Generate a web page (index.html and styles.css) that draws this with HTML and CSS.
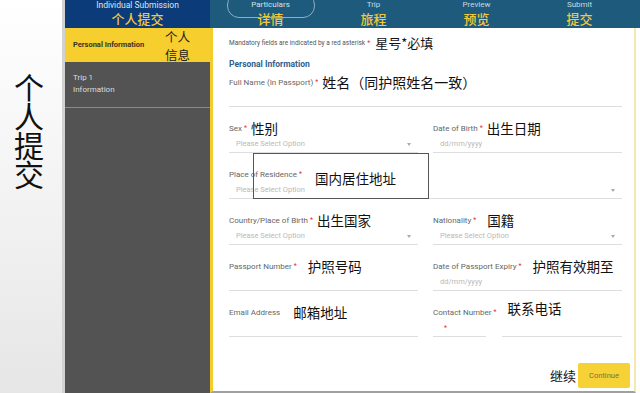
FILE: index.html
```html
<!DOCTYPE html>
<html lang="zh">
<head>
<meta charset="utf-8">
<title>Individual Submission</title>
<link rel="stylesheet" href="styles.css">
</head>
<body>
<div class="page">
  <aside class="rail"><span class="rail-text">个人提交</span></aside>
  <div class="app">
    <header class="topbar">
      <div class="brand"><span class="en">Individual Submission</span><span class="zh">个人提交</span></div>
      <nav class="tabs">
        <div class="tab active"><span class="en">Particulars</span><span class="zh">详情</span></div>
        <div class="tab"><span class="en">Trip</span><span class="zh">旅程</span></div>
        <div class="tab"><span class="en">Preview</span><span class="zh">预览</span></div>
        <div class="tab"><span class="en">Submit</span><span class="zh">提交</span></div>
      </nav>
    </header>
    <div class="body">
      <aside class="sidebar">
        <div class="side-item active"><span class="en">Personal Information</span><span class="zh-stack"><span class="zh">个人</span><span class="zh">信息</span></span></div>
        <div class="side-item"><span class="en">Trip 1<br>Information</span></div>
      </aside>
      <main class="main">
        <div class="note">Mandatory fields are indicated by a red asterisk <i class="req">*</i><span class="zh">星号*必填</span></div>
        <div class="heading">Personal Information</div>
        <div class="grid">
          <div class="field full tall">
            <div class="label">Full Name (In Passport) <i class="req">*</i><span class="zh">姓名（同护照姓名一致）</span></div>
            <div class="value"></div>
          </div>

          <div class="field">
            <div class="label">Sex <i class="req">*</i><span class="zh">性别</span></div>
            <div class="value select">Please Select Option</div>
          </div>
          <div class="field">
            <div class="label">Date of Birth <i class="req">*</i><span class="zh">出生日期</span></div>
            <div class="value">dd/mm/yyyy</div>
          </div>

          <div class="field full">
            <div class="label">Place of Residence <i class="req">*</i></div>
            <div class="value select">Please Select Option</div>
          </div>

          <div class="field">
            <div class="label">Country/Place of Birth <i class="req">*</i><span class="zh">出生国家</span></div>
            <div class="value select">Please Select Option</div>
          </div>
          <div class="field">
            <div class="label">Nationality <i class="req">*</i><span class="zh wide">国籍</span></div>
            <div class="value select">Please Select Option</div>
          </div>

          <div class="field">
            <div class="label">Passport Number <i class="req">*</i><span class="zh wide">护照号码</span></div>
            <div class="value"></div>
          </div>
          <div class="field">
            <div class="label">Date of Passport Expiry <i class="req">*</i><span class="zh wide">护照有效期至</span></div>
            <div class="value">dd/mm/yyyy</div>
          </div>

          <div class="field">
            <div class="label">Email Address<span class="zh xwide">邮箱地址</span></div>
            <div class="value"></div>
          </div>
          <div class="field split">
            <div class="label">Contact Number <i class="req">*</i><span class="zh wide up">联系电话</span></div>
            <div class="phone">
              <div class="value code"><i class="req">*</i></div>
              <div class="value number"></div>
            </div>
          </div>
        </div>
        <div class="actions">
          <span class="zh">继续</span>
          <button class="btn">Continue</button>
        </div>
        <div class="callout"><span class="zh">国内居住地址</span></div>
      </main>
    </div>
  </div>
</div>
</body>
</html>
```

FILE: styles.css
```css
* { box-sizing: border-box; }
html, body { margin: 0; padding: 0; }
body {
  width: 640px;
  height: 393px;
  overflow: hidden;
  background: #fff;
  font-family: Roboto, "Noto Sans", "Noto Sans CJK SC", sans-serif;
}
.zh { font-family: "Noto Sans CJK SC", sans-serif; }

.page { display: flex; width: 640px; height: 393px; }

.rail {
  flex: 0 0 65px;
  background: linear-gradient(to bottom, #ffffff 0%, #f3f3f3 50%, #e6e6e6 100%);
  border-right: 3px solid #d2d2d2;
  display: flex;
  justify-content: center;
  padding-top: 72px;
  padding-right: 4px;
}
.rail-text {
  font-family: "Noto Sans CJK SC", sans-serif;
  font-size: 30px;
  line-height: 29px;
  width: 31px;
  color: #111;
  font-weight: 400;
  word-break: break-all;
  text-align: center;
}

.app { flex: 0 0 575px; display: flex; flex-direction: column; }

.topbar { display: flex; height: 28px; flex: 0 0 28px; overflow: hidden; }
.brand {
  flex: 0 0 145px;
  background: #0c3b79;
  display: flex;
  flex-direction: column;
  align-items: center;
}
.brand .en, .tab .en {
  font-size: 8.5px;
  line-height: 10px;
  height: 10px;
  color: #dfe6ef;
}
.brand .zh, .tab .zh {
  font-size: 13px;
  line-height: 16px;
  height: 16px;
  margin-top: 1px;
  color: #f2c93c;
  font-weight: 500;
}
.tabs {
  flex: 1;
  background: #1e5a7c;
  display: flex;
  padding-left: 9px;
}
.tab {
  position: relative;
  width: 103px;
  display: flex;
  flex-direction: column;
  align-items: center;
}
.tab .en { color: #c9d8e2; font-size: 8px; }
.tab.active::before {
  content: "";
  position: absolute;
  left: 8px;
  top: -7px;
  width: 86px;
  height: 23px;
  border: 1px solid #8fb0c4;
  border-radius: 12px;
}
.tab.active .en { color: #d6e2ea; }

.body { flex: 1; display: flex; min-height: 0; }
.sidebar { flex: 0 0 145px; background: #535353; display: flex; flex-direction: column; }
.side-item {
  display: flex;
  align-items: flex-start;
  padding: 10px 8px 0;
  height: 46px;
  border-bottom: 1px solid #8a8a8a;
}
.side-item .en { font-size: 8px; line-height: 12px; color: #dcdcdc; }
.side-item.active {
  background: #f6cf2e;
  height: 34px;
  padding: 0 20px 0 8px;
  border-bottom: 0;
  justify-content: space-between;
  align-items: center;
}
.side-item.active .en { color: #3a3320; font-weight: 700; font-size: 7.5px; }
.zh-stack {
  display: flex;
  flex-direction: column;
  align-items: center;
  margin-top: 1px;
}
.zh-stack .zh {
  font-size: 12.5px;
  line-height: 18px;
  height: 18px;
  color: #222;
}

.main {
  position: relative;
  flex: 0 0 426px;
  background: #fff;
  border-left: 3px solid #f4cd2c;
  border-right: 2px solid #f3e8ad;
  border-bottom: 2px solid #a0a0a0;
  padding: 7px 12px 0 16px;
}
.note {
  display: flex;
  align-items: center;
  height: 15px;
  font-size: 6.5px;
  color: #555;
}
.note .zh { font-size: 13px; color: #111; margin-left: 5px; }
.req { font-style: normal; color: #d33; font-size: 7px; margin-left: 2px; }
.heading {
  margin-top: 7px;
  height: 14px;
  line-height: 14px;
  font-size: 8.5px;
  font-weight: 700;
  color: #2f5f8c;
}
.grid {
  margin-top: 2px;
  display: grid;
  grid-template-columns: 189px 189px;
  column-gap: 15px;
  row-gap: 12px;
}
.field { height: 34px; display: flex; flex-direction: column; }
.field.full { grid-column: 1 / -1; }
.label {
  height: 18px;
  display: flex;
  align-items: center;
  font-size: 8px;
  color: #666;
  white-space: nowrap;
}
.label .zh { font-size: 13.5px; color: #111; margin-left: 4px; }
.label .zh.wide { margin-left: 11px; }
.label .zh.xwide { margin-left: 13px; }
.label .zh.up { position: relative; top: -4px; }
.field.tall .label .zh { font-size: 14px; }
.value {
  position: relative;
  height: 16px;
  border-bottom: 1px solid #dedede;
  font-size: 7.5px;
  color: #b9b9b9;
  padding: 2px 0 0 7px;
}
.value.select::after {
  content: "";
  position: absolute;
  right: 7px;
  top: 6px;
  border-left: 2.5px solid transparent;
  border-right: 2.5px solid transparent;
  border-top: 3px solid #aaa;
}
.phone { display: flex; justify-content: space-between; }
.value.code { width: 53px; padding-left: 9px; }
.value.number { width: 120px; }

.actions {
  margin-top: 26px;
  display: flex;
  justify-content: flex-end;
  align-items: center;
  gap: 2px;
  margin-right: -8px;
}
.actions .zh { font-size: 13px; color: #111; }
.btn {
  width: 52px;
  height: 25px;
  border: 0;
  border-radius: 2px;
  background: #f7d236;
  color: #7d7140;
  font-family: Roboto, sans-serif;
  font-size: 7.5px;
  padding: 0;
}

.callout {
  position: absolute;
  left: 40px;
  top: 125px;
  width: 176px;
  height: 46px;
  border: 1px solid #555;
  display: flex;
  align-items: center;
  padding: 4px 0 0 61px;
}
.callout .zh { font-size: 13.5px; color: #111; }
```
